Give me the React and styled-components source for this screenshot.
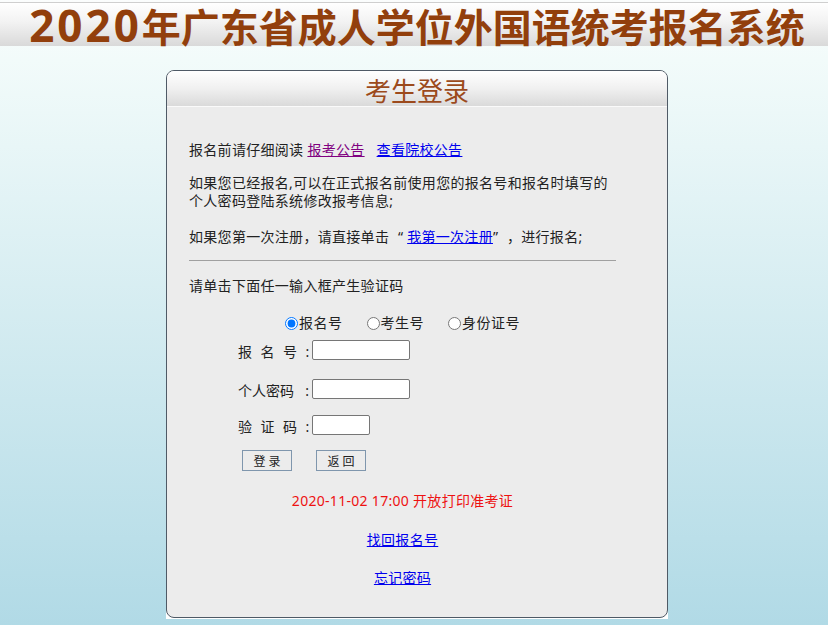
import React from "react";
import styled, { createGlobalStyle } from "styled-components";

const GlobalStyle = createGlobalStyle`
  html, body {
    margin: 0;
    padding: 0;
  }
  body {
    min-height: 100vh;
    background: linear-gradient(to bottom, #fbfdfd 0px, #f2fbfa 60px, #b1dae6 625px);
    font-family: "Noto Sans", "Noto Sans CJK SC", sans-serif;
    color: #222;
  }
`;

const Banner = styled.div`
  margin-top: 2px;
  border-top: 1px solid #cfcfcf;
  height: 43px;
  background: linear-gradient(to bottom, #ffffff 0%, #f2f2f2 45%, #d9d9d9 100%);
  display: flex;
  justify-content: center;
  align-items: center;
`;

const Title = styled.h1`
  margin: 0;
  font-family: "Noto Sans CJK SC", sans-serif;
  font-size: 39px;
  font-weight: 700;
  line-height: 43px;
  color: #923f0c;
  white-space: nowrap;
  transform: translate(3px, 1px);
`;

const Year = styled.span`
  font-family: "Noto Sans", sans-serif;
  font-size: 44px;
  line-height: 43px;
  letter-spacing: 3px;
`;

const PanelWrap = styled.div`
  width: 502px;
  margin: 24px 0 0 calc(50% - 248px);
  background: linear-gradient(to bottom, transparent calc(100% - 10px), #ffffff calc(100% - 10px));
  padding-bottom: 1px;
`;

const Panel = styled.div`
  border: 1px solid #4f5a66;
  border-radius: 8px;
  background: #ececec;
  overflow: hidden;
`;

const PanelHead = styled.div`
  height: 35px;
  border-bottom: 1px solid #fafafa;
  background: linear-gradient(to bottom, #ffffff 0%, #f0f0f0 50%, #dadada 100%);
  text-align: center;
  font-family: "Noto Sans CJK SC", sans-serif;
  font-size: 26px;
  line-height: 37px;
  color: #9c4a1c;
`;

const Content = styled.div`
  padding: 0 51px 30px 22px;
  font-size: 14px;
  line-height: 18px;
  letter-spacing: 0.3px;
`;

const Para = styled.p`
  margin: ${(p) => p.$top}px 0 0;
  white-space: nowrap;
`;

const Quote = styled.span`
  display: inline-block;
  width: 14px;
  text-align: ${(p) => (p.$open ? "right" : "left")};
`;

const Link = styled.a`
  color: ${(p) => (p.$visited ? "#800080" : "#0000ee")};
  text-decoration: underline;
  cursor: pointer;
  margin-left: ${(p) => p.$gap || 0}px;
`;

const Rule = styled.hr`
  margin: 14px 0 0;
  border: 0;
  border-top: 1px solid #a0a0a0;
  height: 0;
`;

const RadioRow = styled.div`
  margin: 19px 0 0 96px;
  display: flex;
  align-items: center;
  gap: 24px;
`;

const RadioLabel = styled.label`
  display: flex;
  align-items: center;
  gap: 1px;
  letter-spacing: 0.5px;
  input {
    margin: 0;
    width: 13px;
    height: 13px;
  }
`;

const Form = styled.div`
  margin: 8px 0 0 49px;
  display: grid;
  grid-template-columns: 74px auto;
  align-items: center;
  letter-spacing: 0;
`;

const FieldLabel = styled.label`
  box-sizing: border-box;
  display: flex;
  align-items: center;
  height: 20px;
  padding-top: 3px;
  white-space: nowrap;
  margin-top: ${(p) => p.$top}px;
`;

const Chars = styled.span`
  flex-shrink: 0;
  letter-spacing: ${(p) => p.$spread}px;
`;

const Colon = styled.span`
  margin-left: auto;
  margin-right: 3px;
`;

const Field = styled.input`
  box-sizing: border-box;
  width: ${(p) => p.$w}px;
  height: 20px;
  margin-top: ${(p) => p.$top}px;
  border: 1px solid #767676;
  border-radius: 2px;
  background: #fff;
  padding: 1px 2px;
  font-size: 13px;
`;

const Buttons = styled.div`
  grid-column: 1 / span 2;
  margin: 15px 0 0 4px;
  display: flex;
  gap: 24px;
`;

const Button = styled.button`
  width: 50px;
  height: 21px;
  padding: 0;
  border: 1px solid #7f96ad;
  background: #ececec;
  font-family: "Noto Sans CJK SC", sans-serif;
  font-size: 12px;
  color: #222;
  letter-spacing: 3px;
  text-indent: 3px;
`;

const Notice = styled.p`
  margin: 21px 0 0;
  text-align: center;
  color: #ee1111;
`;

const CenterLink = styled.p`
  margin: ${(p) => p.$top}px 0 0;
  text-align: center;
`;

export default function App() {
  return (
    <>
      <GlobalStyle />
      <Banner>
        <Title>
          <Year>2020</Year>年广东省成人学位外国语统考报名系统
        </Title>
      </Banner>
      <PanelWrap>
        <Panel>
          <PanelHead>考生登录</PanelHead>
          <Content>
            <Para $top={34}>
              报名前请仔细阅读
              <Link $visited $gap={4}>报考公告</Link>
              <Link $gap={12}>查看院校公告</Link>
            </Para>
            <Para $top={15}>
              如果您已经报名,可以在正式报名前使用您的报名号和报名时填写的
              <br />
              个人密码登陆系统修改报考信息;
            </Para>
            <Para $top={18}>
              如果您第一次注册，请直接单击<Quote $open>“</Quote> <Link>我第一次注册</Link>
              <Quote>”</Quote>，进行报名;
            </Para>
            <Rule />
            <Para $top={16}>请单击下面任一输入框产生验证码</Para>
            <RadioRow>
              <RadioLabel>
                <input type="radio" name="kind" defaultChecked />
                报名号
              </RadioLabel>
              <RadioLabel>
                <input type="radio" name="kind" />
                考生号
              </RadioLabel>
              <RadioLabel>
                <input type="radio" name="kind" />
                身份证号
              </RadioLabel>
            </RadioRow>
            <Form>
              <FieldLabel $top={0}>
                <Chars $spread={8.5}>报名号</Chars>
                <Colon>:</Colon>
              </FieldLabel>
              <Field $w={98} $top={0} />
              <FieldLabel $top={19}>
                <Chars $spread={0}>个人密码</Chars>
                <Colon>:</Colon>
              </FieldLabel>
              <Field $w={98} $top={19} type="password" />
              <FieldLabel $top={16}>
                <Chars $spread={8.5}>验证码</Chars>
                <Colon>:</Colon>
              </FieldLabel>
              <Field $w={58} $top={16} />
              <Buttons>
                <Button>登录</Button>
                <Button>返回</Button>
              </Buttons>
            </Form>
            <Notice>2020-11-02 17:00 开放打印准考证</Notice>
            <CenterLink $top={21}>
              <Link>找回报名号</Link>
            </CenterLink>
            <CenterLink $top={20}>
              <Link>忘记密码</Link>
            </CenterLink>
          </Content>
        </Panel>
      </PanelWrap>
    </>
  );
}
